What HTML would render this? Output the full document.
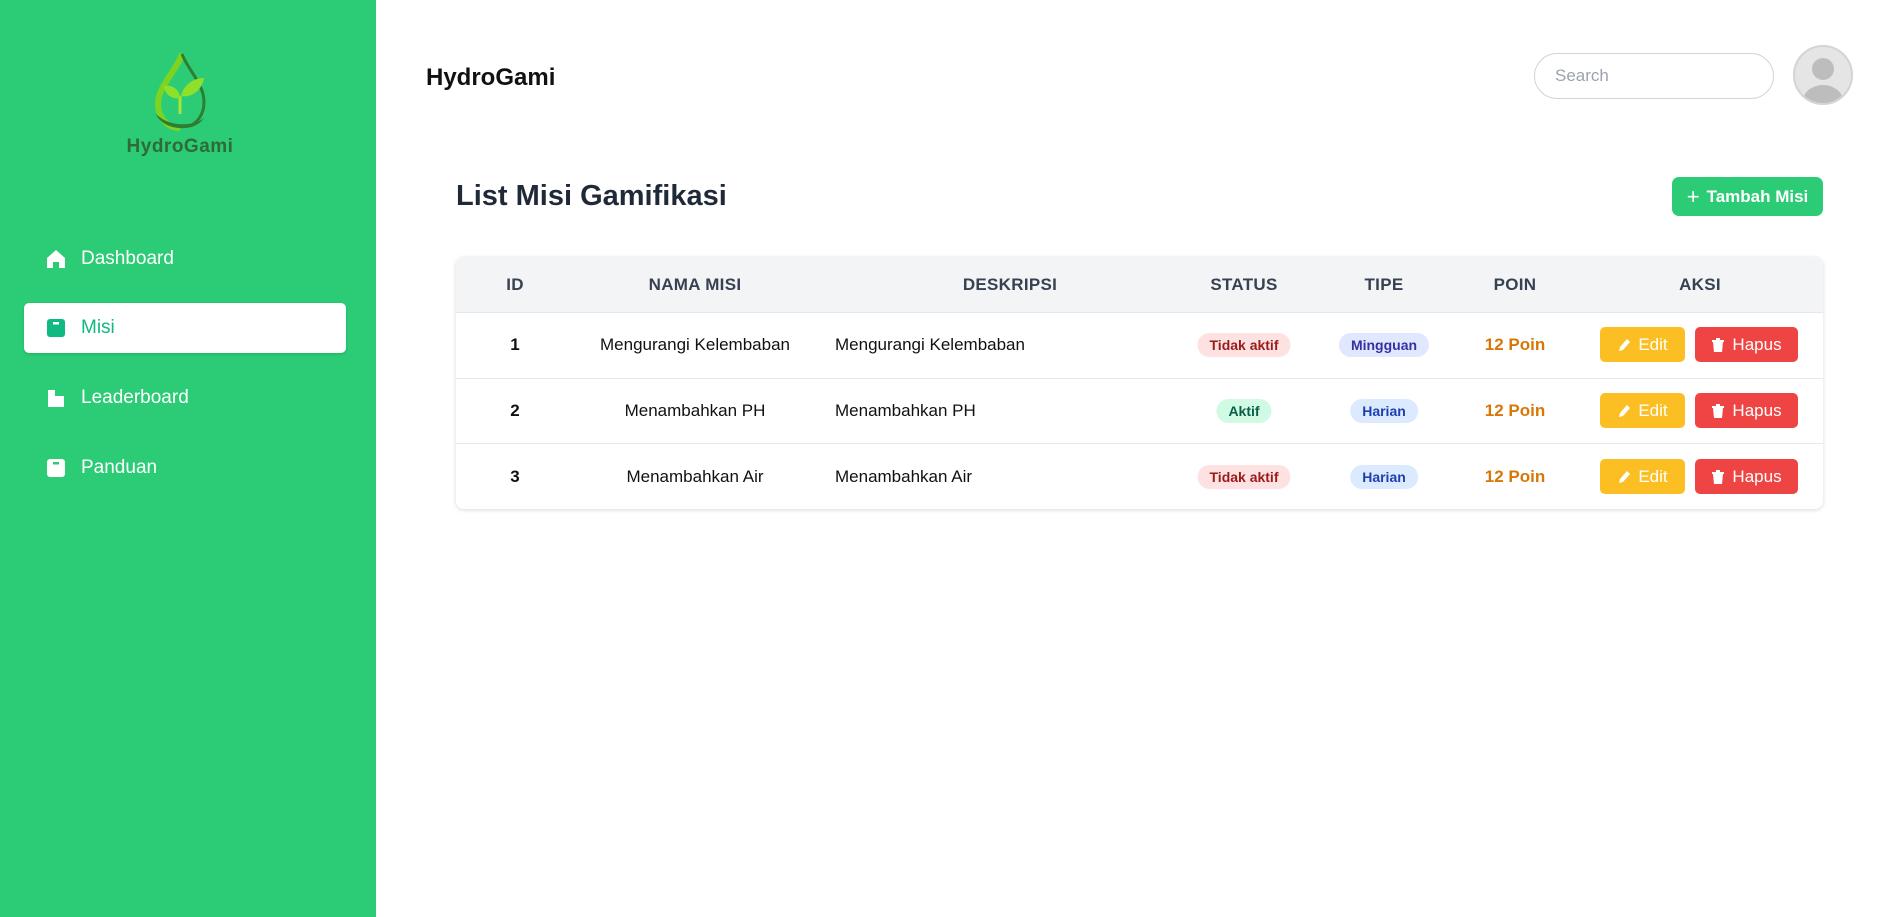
<!DOCTYPE html>
<html><head><meta charset="utf-8"><style>
*{box-sizing:border-box;margin:0;padding:0}
body{width:1897px;height:917px;background:#fff;font-family:"Liberation Sans",sans-serif;position:relative;overflow:hidden;color:#111}
.side{position:absolute;left:0;top:0;width:376px;height:917px;background:#2ccc76}
.nav{position:absolute;left:24px;width:322px;height:50px;display:flex;align-items:center;padding-left:22px;color:#fff;font-size:19px}
.nav svg{width:20px;height:20px;margin-right:15px}
.nav.act{background:#fff;color:#10b981;border-radius:5px;box-shadow:0 1px 3px rgba(0,0,0,.15)}
.abs{position:absolute}
.c{position:absolute;transform:translate(-50%,-50%);white-space:nowrap}
.th{font-weight:bold;color:#374151;font-size:17px;letter-spacing:.3px}
.td{font-size:17px;color:#111}
.pill{font-size:14px;padding:4px 12px;border-radius:12px;font-weight:600}
.poin{color:#d97706;font-size:17px;font-weight:600}
.btn{position:absolute;height:35px;border-radius:5px;color:#fff;font-size:17px;display:flex;align-items:center;justify-content:center;gap:7px}
.line{position:absolute;left:456px;width:1367px;height:1px;background:#e5e7eb}
</style></head><body>
<div class="side">
  <svg class="abs" style="left:150px;top:52px" width="60" height="82" viewBox="0 0 60 82">
    <path d="M32 2 C26 20 8 34 8 52 C8 66 18 76 30 76" fill="none" stroke="#7ed321" stroke-width="6"/>
    <path d="M32 2 C38 18 54 32 54 50 C54 62 48 70 40 74" fill="none" stroke="#2e7d32" stroke-width="3"/>
    <path d="M6 62 C12 78 44 82 54 66 C44 74 20 76 6 62Z" fill="#2e7d32"/>
    <path d="M30 62 L30 44" stroke="#a5e635" stroke-width="3"/>
    <path d="M30 46 C20 48 14 40 14 34 C22 32 30 38 30 46Z" fill="#8ee02a"/>
    <path d="M31 44 C34 32 44 26 54 26 C52 38 42 46 31 44Z" fill="#8ee02a"/>
  </svg>
  <div class="abs" style="left:0;width:360px;text-align:center;top:136px;font-weight:bold;font-size:19px;color:#2e6b35;letter-spacing:.5px">HydroGami</div>
  <div class="nav" style="top:234px"><svg viewBox="0 0 20 20"><path d="M10 1 L19 9 V19 H13 V13 H7 V19 H1 V9Z" fill="#fff"/></svg>Dashboard</div>
  <div class="nav act" style="top:303px"><svg viewBox="0 0 20 20"><rect x="1" y="1" width="18" height="18" rx="3" fill="#10b981"/><rect x="7" y="4" width="6" height="2.5" fill="#fff"/></svg>Misi</div>
  <div class="nav" style="top:373px"><svg viewBox="0 0 20 20"><path d="M2 2 H9 V19 H2Z M9 8 H18 V19 H9Z" fill="#fff"/></svg>Leaderboard</div>
  <div class="nav" style="top:443px"><svg viewBox="0 0 20 20"><rect x="1" y="1" width="18" height="18" rx="3" fill="#fff"/><rect x="7" y="4" width="6" height="2.5" fill="#2ccc76"/></svg>Panduan</div>
</div>
<div class="abs" style="left:426px;top:64px;font-size:24px;font-weight:bold">HydroGami</div>
<div class="abs" style="left:1534px;top:53px;width:240px;height:46px;border:1px solid #d1d5db;border-radius:23px;padding-left:20px;line-height:44px;color:#9ca3af;font-size:17px">Search</div>
<div class="abs" style="left:1793px;top:45px;width:60px;height:60px;border-radius:50%;background:#e5e5e5;border:2px solid #d4d4d4;overflow:hidden">
  <svg width="56" height="56" viewBox="0 0 56 56"><circle cx="28" cy="22" r="11" fill="#bdbdbd"/><ellipse cx="28" cy="54" rx="20" ry="16" fill="#bdbdbd"/></svg>
</div>
<div class="abs" style="left:456px;top:180px;font-size:29px;font-weight:bold;color:#1f2937">List Misi Gamifikasi</div>
<div class="btn" style="left:1672px;top:177px;width:151px;height:39px;background:#2ccc76;font-weight:bold;font-size:17px;border-radius:7px"><span style="font-weight:normal;font-size:22px">+</span>Tambah Misi</div>

<div class="abs" style="left:456px;top:257px;width:1367px;height:252px;border-radius:8px;box-shadow:0 1px 4px rgba(0,0,0,.15);overflow:hidden">
  <div style="height:55px;background:#f3f4f6"></div>
</div>
<div class="line" style="top:312px"></div>
<div class="line" style="top:378px"></div>
<div class="line" style="top:443px"></div>

<div class="c th" style="left:515px;top:285px">ID</div>
<div class="c th" style="left:695px;top:285px">NAMA MISI</div>
<div class="c th" style="left:1010px;top:285px">DESKRIPSI</div>
<div class="c th" style="left:1244px;top:285px">STATUS</div>
<div class="c th" style="left:1384px;top:285px">TIPE</div>
<div class="c th" style="left:1515px;top:285px">POIN</div>
<div class="c th" style="left:1700px;top:285px">AKSI</div>

<!-- rows y centers 345, 411, 477 -->
<div class="c td" style="left:515px;top:345px;font-weight:bold">1</div>
<div class="c td" style="left:695px;top:345px">Mengurangi Kelembaban</div>
<div class="abs td" style="left:835px;top:335px">Mengurangi Kelembaban</div>
<div class="c pill" style="left:1244px;top:345px;background:#fee2e2;color:#991b1b">Tidak aktif</div>
<div class="c pill" style="left:1384px;top:345px;background:#e0e7ff;color:#3730a3">Mingguan</div>
<div class="c poin" style="left:1515px;top:345px">12 Poin</div>

<div class="c td" style="left:515px;top:411px;font-weight:bold">2</div>
<div class="c td" style="left:695px;top:411px">Menambahkan PH</div>
<div class="abs td" style="left:835px;top:401px">Menambahkan PH</div>
<div class="c pill" style="left:1244px;top:411px;background:#d1fae5;color:#065f46">Aktif</div>
<div class="c pill" style="left:1384px;top:411px;background:#dbeafe;color:#1e40af">Harian</div>
<div class="c poin" style="left:1515px;top:411px">12 Poin</div>

<div class="c td" style="left:515px;top:477px;font-weight:bold">3</div>
<div class="c td" style="left:695px;top:477px">Menambahkan Air</div>
<div class="abs td" style="left:835px;top:467px">Menambahkan Air</div>
<div class="c pill" style="left:1244px;top:477px;background:#fee2e2;color:#991b1b">Tidak aktif</div>
<div class="c pill" style="left:1384px;top:477px;background:#dbeafe;color:#1e40af">Harian</div>
<div class="c poin" style="left:1515px;top:477px">12 Poin</div>

<div class="btn" style="left:1600px;top:327px;width:85px;background:#fbbf24"><svg width="14" height="16" viewBox="0 0 14 16"><path d="M2 14 L3 10 L10 2 L13 5 L6 13Z" fill="#fff"/></svg>Edit</div>
<div class="btn" style="left:1695px;top:327px;width:103px;background:#ef4444"><svg width="14" height="16" viewBox="0 0 14 16"><path d="M1 3 H13 V5 H1Z M5 1 H9 V3 H5Z M2 5 H12 L11 15 H3Z" fill="#fff"/></svg>Hapus</div>
<div class="btn" style="left:1600px;top:393px;width:85px;background:#fbbf24"><svg width="14" height="16" viewBox="0 0 14 16"><path d="M2 14 L3 10 L10 2 L13 5 L6 13Z" fill="#fff"/></svg>Edit</div>
<div class="btn" style="left:1695px;top:393px;width:103px;background:#ef4444"><svg width="14" height="16" viewBox="0 0 14 16"><path d="M1 3 H13 V5 H1Z M5 1 H9 V3 H5Z M2 5 H12 L11 15 H3Z" fill="#fff"/></svg>Hapus</div>
<div class="btn" style="left:1600px;top:459px;width:85px;background:#fbbf24"><svg width="14" height="16" viewBox="0 0 14 16"><path d="M2 14 L3 10 L10 2 L13 5 L6 13Z" fill="#fff"/></svg>Edit</div>
<div class="btn" style="left:1695px;top:459px;width:103px;background:#ef4444"><svg width="14" height="16" viewBox="0 0 14 16"><path d="M1 3 H13 V5 H1Z M5 1 H9 V3 H5Z M2 5 H12 L11 15 H3Z" fill="#fff"/></svg>Hapus</div>
</body></html>
